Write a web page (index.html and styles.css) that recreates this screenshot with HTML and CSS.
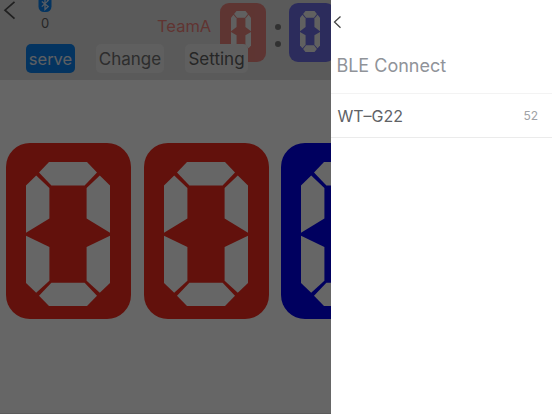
FILE: index.html
```
<!DOCTYPE html>
<html lang="en">
<head>
    <meta charset="UTF-8">
    <meta name="viewport" content="width=device-width, initial-scale=1.0">
    <title>Scoreboard</title>
    <link rel="stylesheet" href="styles.css">
</head>
<body>
    <svg class="defs" width="0" height="0">
        <symbol id="zero" viewBox="0 0 84 144" preserveAspectRatio="none">
            <path d="M23 0h38l10 10.4-12.4 13H25.4L13 10.4z"/>
            <path d="M10.2 13.4l13.2 12.6v30.4L0 70.7V23.4z"/>
            <path d="M73.8 13.4L60.6 26v30.4L84 70.7V23.4z"/>
            <path d="M0 73.7l23.4 11.3v33.7L10.2 130.7 0 121z"/>
            <path d="M84 73.7L60.6 85v33.7l13.2 12L84 121z"/>
            <path d="M25.4 120.7h33.2l12.4 13L61 144H23L13 133.7z"/>
        </symbol>
    </svg>

    <main class="board">
        <header class="topbar">
            <div class="controls">
                <div class="status">
                    <svg class="back" width="14" height="20" viewBox="0 0 14 20"><path d="M11.5 1.8L2 10.2l9.5 8.5"/></svg>
                    <div class="bluetooth">
                        <svg width="14" height="13" viewBox="0 0 14 13">
                            <path class="badge" d="M.5 0h13v6.5a5.5 5.5 0 0 1-5.5 5.5H6A5.5 5.5 0 0 1 .5 6.5z"/>
                            <path class="rune" d="M3.8 1.4l6.4 5.2L7 9.5V-2l3.2 2.6-6.4 6"/>
                        </svg>
                        <span>0</span>
                    </div>
                    <span class="team">TeamA</span>
                </div>
                <div class="buttons">
                    <button class="btn primary">serve</button>
                    <button class="btn muted">Change</button>
                    <button class="btn">Setting</button>
                </div>
            </div>
            <div class="sets">
                <div class="tile small red"><svg><use href="#zero"/></svg></div>
                <div class="colon"><i></i><i></i></div>
                <div class="tile small blue"><svg><use href="#zero"/></svg></div>
            </div>
        </header>
        <section class="score">
            <div class="tile red"><svg><use href="#zero"/></svg></div>
            <div class="tile red"><svg><use href="#zero"/></svg></div>
            <div class="tile blue"><svg><use href="#zero"/></svg></div>
        </section>
    </main>

    <div class="mask"></div>

    <aside class="drawer">
        <svg class="drawer-back" width="9" height="14" viewBox="0 0 9 14"><path d="M7.5 1.5L1.5 7l6 5.7"/></svg>
        <h1>BLE Connect</h1>
        <div class="device">
            <span>WT–G22</span>
            <span class="rssi">52</span>
        </div>
    </aside>
</body>
</html>
```

FILE: styles.css
```
* {
    box-sizing: border-box;
}

body {
    margin: 0;
    height: 414px;
    overflow: hidden;
    font-family: Inter, "Liberation Sans", sans-serif;
    background-color: #fff;
}

.defs {
    position: absolute;
}

.board {
    width: 552px;
    height: 414px;
    border-bottom: 1px solid #e4e4e4;
}

.topbar {
    display: flex;
    height: 80px;
    background-color: #e1e1e1;
}

.controls {
    width: 220px;
    flex: none;
    position: relative;
    z-index: 1;
}

.status {
    display: flex;
    height: 44px;
}

.back {
    margin: 0 0 0 3px;
    fill: none;
    stroke: #505050;
    stroke-width: 1.7;
}

.bluetooth {
    display: flex;
    flex-direction: column;
    align-items: center;
    width: 14px;
    margin-left: 21px;
    font-size: 13px;
    line-height: 20px;
    color: #606060;
}

.bluetooth svg {
    flex: none;
}

.badge {
    fill: #0b82f0;
}

.rune {
    fill: none;
    stroke: #d8e8fa;
    stroke-width: 1.3;
}

.team {
    margin: 16px 0 0 105px;
    font-size: 16.5px;
    line-height: 20px;
    color: #f0827c;
}

.buttons {
    display: flex;
    gap: 21px;
    padding-left: 26px;
}

.btn {
    flex: none;
    width: 63px;
    height: 29px;
    padding: 1px 0 0;
    border: none;
    border-radius: 5px;
    background-color: #ededed;
    color: #606060;
    font: 17px/28px Inter, "Liberation Sans", sans-serif;
}

.btn.primary {
    width: 49px;
    background-color: #0b82f0;
    color: #e8eef5;
    font-size: 16.5px;
}

.btn.muted {
    width: 68px;
    color: #707070;
}

.sets {
    display: flex;
    padding-top: 2.5px;
}

.tile {
    display: flex;
    flex: none;
    width: 125px;
    height: 176px;
    padding: 19px 20px;
    border-radius: 24px;
    fill: #fff;
}

.tile svg {
    width: 84px;
    height: 144px;
}

.tile.red {
    background-color: #f52b1e;
}

.tile.blue {
    background-color: #0000ee;
}

.tile.small {
    width: 46px;
    height: 59px;
    padding: 8.5px 11px;
    border-radius: 9px;
    opacity: 0.5;
}

.tile.small svg {
    width: 20px;
    height: 41px;
}

.colon {
    display: flex;
    flex-direction: column;
    align-items: center;
    gap: 11px;
    width: 23px;
    padding-top: 21.5px;
}

.colon i {
    width: 6px;
    height: 6px;
    border-radius: 50%;
    background-color: #7c7c7c;
}

.score {
    display: flex;
    gap: 12.8px;
    padding: 63.3px 0 0 5.8px;
}

.mask {
    position: absolute;
    inset: 0;
    z-index: 2;
    background-color: rgba(0, 0, 0, 0.6);
}

.drawer {
    position: absolute;
    top: 0;
    right: 0;
    z-index: 3;
    width: 220.6px;
    height: 414px;
    background-color: #fff;
}

.drawer-back {
    display: block;
    margin: 15px 0 0 2px;
    fill: none;
    stroke: #444;
    stroke-width: 1.3;
}

.drawer h1 {
    height: 65px;
    margin: 0;
    padding: 24px 0 0 5px;
    border-bottom: 1px solid #f3f3f3;
    font-size: 18px;
    font-weight: 400;
    line-height: 26px;
    color: #909399;
}

.device {
    display: flex;
    align-items: center;
    justify-content: space-between;
    height: 44px;
    padding: 0 14px 0 6px;
    border-bottom: 1px solid #ebebeb;
    font-size: 16px;
    color: #606266;
}

.rssi {
    font-size: 12px;
    color: #a0a2a6;
}
```
